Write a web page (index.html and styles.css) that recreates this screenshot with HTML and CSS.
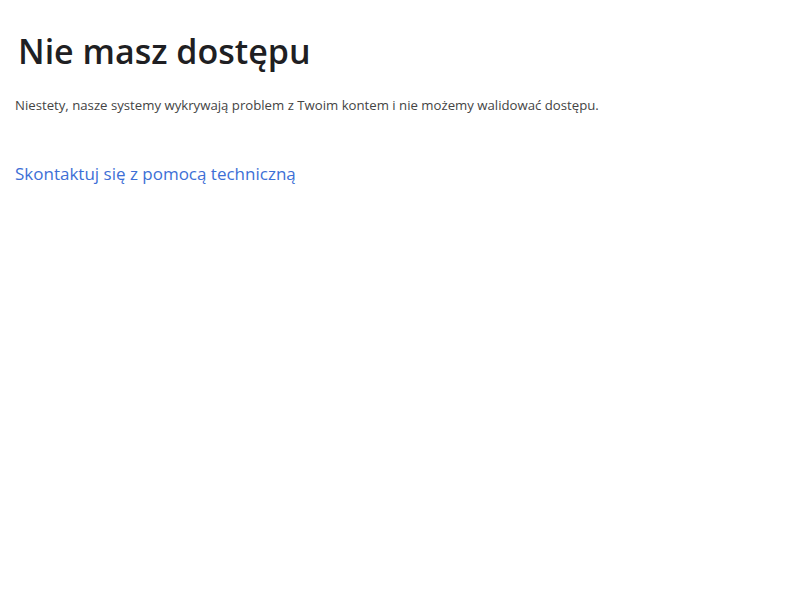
FILE: index.html
```html
<!DOCTYPE html>
<html lang="pl">
<head>
<meta charset="utf-8">
<title>Nie masz dostępu</title>
<link rel="stylesheet" href="styles.css">
</head>
<body>
<main class="page">
  <h1 class="title">Nie masz dostępu</h1>
  <p class="message">Niestety, nasze systemy wykrywają problem z Twoim kontem i nie możemy walidować dostępu.</p>
  <a class="support" href="#">Skontaktuj się z pomocą techniczną</a>
</main>
</body>
</html>
```

FILE: styles.css
```css
html, body {
  margin: 0;
  padding: 0;
  background: #ffffff;
}
body {
  font-family: "Open Sans", "Noto Sans", sans-serif;
  color: #212529;
}
.page {
  padding: 0 15px;
}
.title {
  margin: 0;
  padding: 28px 0 0 3px;
  font-size: 34px;
  line-height: 46px;
  font-weight: 600;
  color: #1f1f23;
}
.message {
  margin: 21px 0 0;
  font-size: 13.2px;
  line-height: 20px;
  color: #444;
}
.support {
  display: inline-block;
  margin-top: 47px;
  font-size: 17px;
  line-height: 24px;
  color: #3d6fd6;
  text-decoration: none;
}
```
